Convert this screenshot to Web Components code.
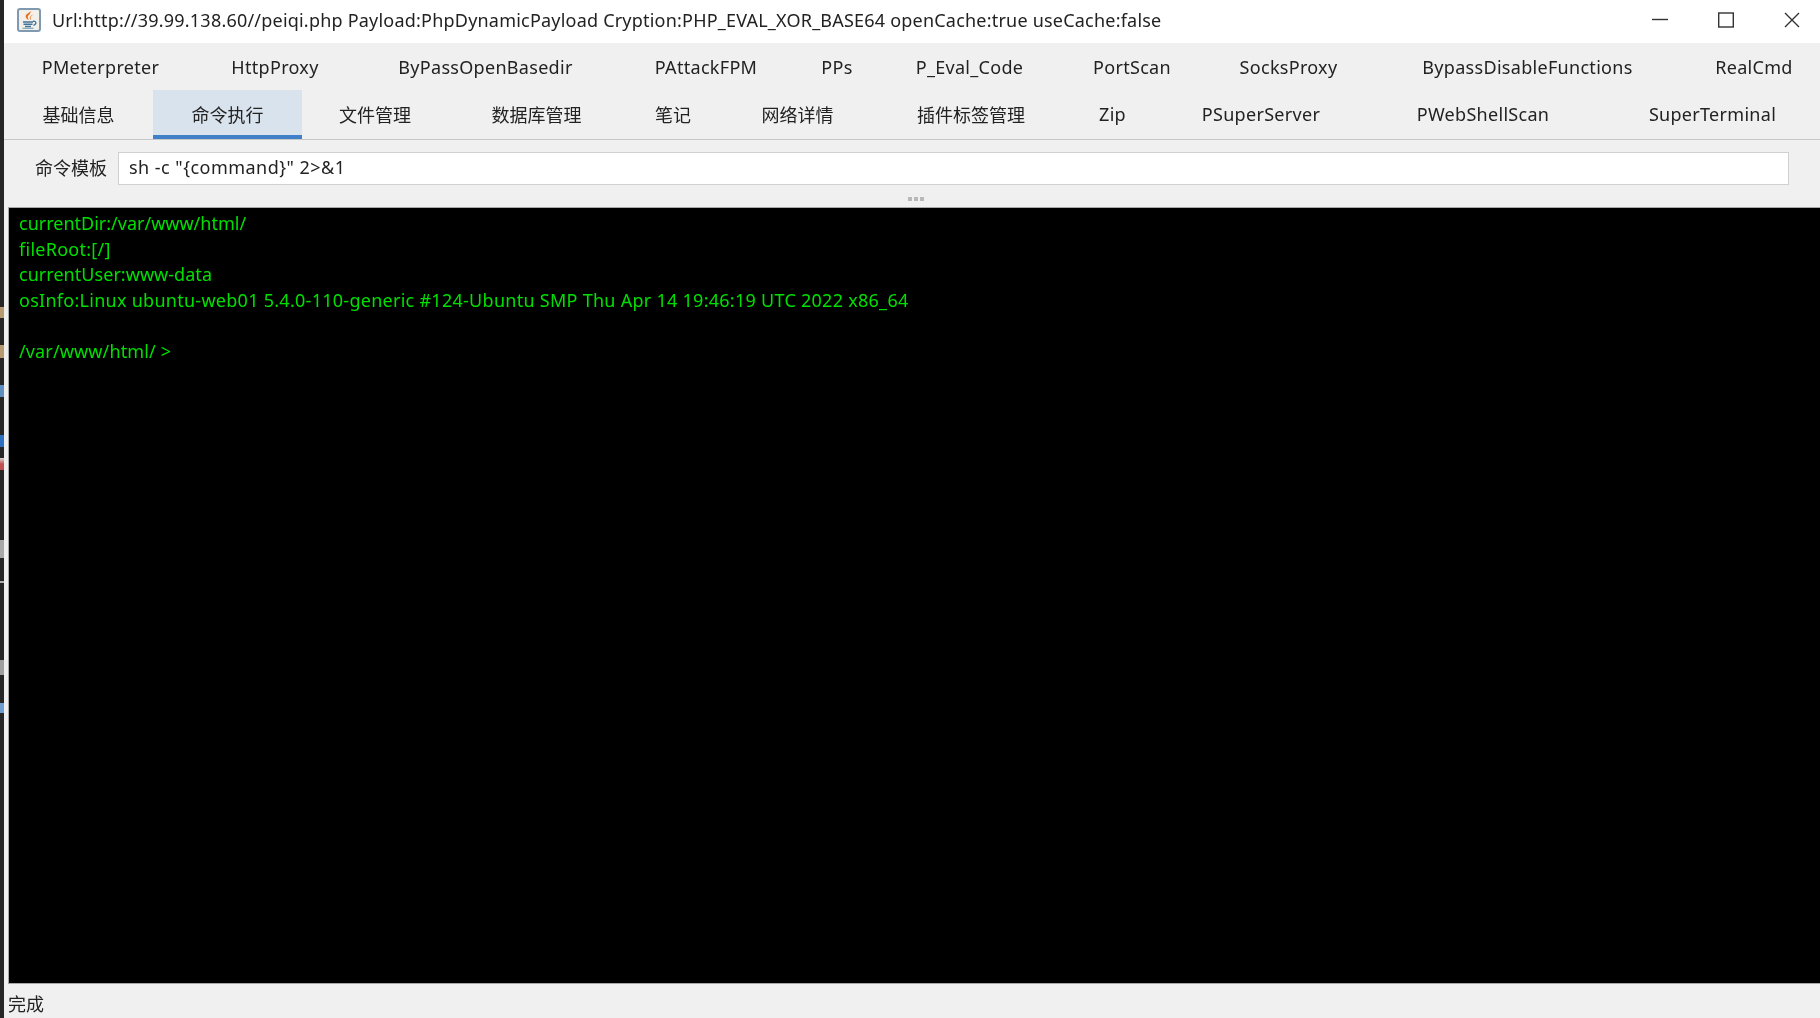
<!DOCTYPE html>
<html lang="zh">
<head>
<meta charset="utf-8">
<title>Shell</title>
<style>
    html, body { margin: 0; height: 100%; background: #262626; }
    body {
        display: flex;
        font: 18px "Noto Sans", "Noto Sans CJK SC", sans-serif;
        color: #222;
        overflow: hidden;
    }
</style>
</head>
<body>
<desk-edge></desk-edge>
<shell-window>
    <title-bar>Url:http://39.99.138.60//peiqi.php Payload:PhpDynamicPayload Cryption:PHP_EVAL_XOR_BASE64 openCache:true useCache:false</title-bar>
    <tab-row>
        <tab-item latin style="--w:193px">PMeterpreter</tab-item>
        <tab-item latin style="--w:156px">HttpProxy</tab-item>
        <tab-item latin style="--w:265px">ByPassOpenBasedir</tab-item>
        <tab-item latin style="--w:176px">PAttackFPM</tab-item>
        <tab-item latin style="--w:86px">PPs</tab-item>
        <tab-item latin style="--w:179px">P_Eval_Code</tab-item>
        <tab-item latin style="--w:146px">PortScan</tab-item>
        <tab-item latin style="--w:167px">SocksProxy</tab-item>
        <tab-item latin style="--w:311px">BypassDisableFunctions</tab-item>
        <tab-item latin style="--w:137px;padding-left:5px">RealCmd</tab-item>
    </tab-row>
    <tab-row last>
        <tab-item style="--w:149px">基础信息</tab-item>
        <tab-item selected style="--w:149px">命令执行</tab-item>
        <tab-item style="--w:146px">文件管理</tab-item>
        <tab-item style="--w:177px">数据库管理</tab-item>
        <tab-item style="--w:96px">笔记</tab-item>
        <tab-item style="--w:153px">网络详情</tab-item>
        <tab-item style="--w:194px">插件标签管理</tab-item>
        <tab-item latin style="--w:89px">Zip</tab-item>
        <tab-item latin style="--w:208px">PSuperServer</tab-item>
        <tab-item latin style="--w:236px">PWebShellScan</tab-item>
        <tab-item latin style="--w:219px;padding-left:4px">SuperTerminal</tab-item>
    </tab-row>
    <command-bar label="命令模板" value='sh -c "{command}" 2&gt;&amp;1'></command-bar>
    <split-handle></split-handle>
    <term-view>
<span style="letter-spacing:0">currentDir:/var/www/html/</span>
<span>fileRoot:[/]</span>
<span style="letter-spacing:.04px">currentUser:www-data</span>
<span>osInfo:Linux ubuntu-web01 5.4.0-110-generic #124-Ubuntu SMP Thu Apr 14 19:46:19 UTC 2022 x86_64</span>

<span style="letter-spacing:.13px">/var/www/html/ &gt;</span></term-view>
    <status-bar>完成</status-bar>
</shell-window>

<script>
    (function () {
        function define(name, css, html, setup) {
            customElements.define(name, class extends HTMLElement {
                constructor() {
                    super();
                    this.attachShadow({ mode: 'open' });
                    this.shadowRoot.innerHTML = '<style>' + css + '</style>' + html;
                }
                connectedCallback() {
                    if (setup) setup(this);
                }
            });
        }

        // sliver of the desktop showing left of the window
        define('desk-edge', `
            :host {
                display: block;
                flex: none;
                width: 4px;
                background:
                    linear-gradient(to bottom,
                        transparent 307px, #b89a70 307px, #b89a70 318px, transparent 318px,
                        transparent 345px, #b89a70 345px, #b89a70 358px, transparent 358px,
                        transparent 385px, #5f8fc0 385px, #5f8fc0 397px, transparent 397px,
                        transparent 435px, #2f6fc0 435px, #2f6fc0 447px, transparent 447px,
                        transparent 458px, #d8d8d8 458px, #c05050 464px, #c05050 470px, transparent 470px,
                        transparent 540px, #a8a8a8 540px, #a8a8a8 558px, transparent 558px,
                        transparent 581px, #b0b0b0 581px, #b0b0b0 583px, transparent 583px,
                        transparent 660px, #a0a0a0 660px, #a0a0a0 675px, transparent 675px,
                        transparent 703px, #6f9fd0 703px, #6f9fd0 713px, transparent 713px),
                    #262626;
            }
        `, '');

        define('shell-window', `
            :host {
                display: flex;
                flex-direction: column;
                flex: 1;
                min-width: 0;
                height: 1018px;
                background: #f0f0f0;
                filter: blur(.45px);
            }
        `, '<slot></slot>');

        define('title-bar', `
            :host {
                display: flex;
                align-items: center;
                flex: none;
                height: 43px;
                padding: 0 20px 3px 13px;
                box-sizing: border-box;
                background: #fff;
            }
            .icon { flex: none; width: 24px; height: 24px; margin-right: 11px; }
            .text { flex: 1; white-space: nowrap; letter-spacing: .21px; }
            .controls { display: flex; gap: 50px; align-items: center; }
            .controls svg { display: block; width: 16px; height: 16px; fill: none; stroke: #333; stroke-width: 1.4; }
        `, `
            <svg class="icon" viewBox="0 0 24 24">
                <rect x="1" y="1" width="22" height="22" rx="2" fill="#f3f0ea" stroke="#7f9ab0" stroke-width="2"/>
                <path d="M13.500 3c1 2.800-3.400 4-2.600 7 .2.800.6 1.300 1 2-3-1.200-4-3.200-2.800-5.200C10 5.500 12.700 4.700 13.500 3zM16 6.500c-1.200 1.300-3 2-2.400 4 .1.500.3.900.6 1.400-2.200-1-2.200-3.600 1.800-5.400z" fill="#e8701e"/>
                <path d="M6 14h10M6.500 16.300h9M8 18.500h6" stroke="#41739c" stroke-width="1.500" fill="none"/>
                <path d="M16 13.300c3.500-.5 4 2.800.5 4" stroke="#41739c" stroke-width="1.300" fill="none"/>
                <path d="M5.500 20.300h11" stroke="#7ea3c0" stroke-width="1.200" fill="none"/>
            </svg>
            <span class="text"><slot></slot></span>
            <div class="controls">
                <svg viewBox="0 0 16 16"><path d="M0 7.500h16"/></svg>
                <svg viewBox="0 0 16 16"><rect x=".7" y="1" width="14.600" height="14"/></svg>
                <svg viewBox="0 0 16 16"><path d="M1 1l14 14M15 1L1 15"/></svg>
            </div>
        `);

        define('tab-row', `
            :host {
                display: flex;
                flex: none;
                height: 47px;
                box-sizing: border-box;
            }
            :host([last]) {
                height: 50px;
                padding-bottom: 1px;
                border-bottom: 1px solid #c8c8c8;
                --tab-lift: 2px;
            }
        `, '<slot></slot>');

        // tab widths are uneven in the original, so each row passes its own --w
        define('tab-item', `
            :host {
                display: flex;
                align-items: center;
                justify-content: center;
                flex: 0 0 var(--w);
                padding-bottom: var(--tab-lift, 0);
                box-sizing: border-box;
                white-space: nowrap;
                margin-bottom: -1px;
            }
            :host([latin]) { letter-spacing: .3px; }
            :host([selected]) {
                background: #d9e3ed;
                box-shadow: inset 0 -4px 0 #4080c8;
            }
        `, '<slot></slot>');

        define('command-bar', `
            :host {
                display: flex;
                align-items: center;
                flex: none;
                height: 45px;
                padding: 12px 31px 1px 31px;
                box-sizing: border-box;
            }
            label { flex: none; margin: 0 11px 2px 0; }
            .field {
                flex: 1;
                height: 33px;
                line-height: 29px;
                padding: 0 10px;
                box-sizing: border-box;
                background: #fff;
                border: 1px solid #d0d0d0;
                white-space: pre;
                letter-spacing: .47px;
            }
        `, '<label></label><div class="field"></div>', function (el) {
            el.shadowRoot.querySelector('label').textContent = el.getAttribute('label');
            el.shadowRoot.querySelector('.field').textContent = el.getAttribute('value');
        });

        define('split-handle', `
            :host {
                display: flex;
                justify-content: center;
                align-items: center;
                gap: 2px;
                flex: none;
                height: 22px;
                padding: 6px 0 0 8px;
                box-sizing: border-box;
            }
            i { width: 4px; height: 4px; background: #b8b8b8; }
        `, '<i></i><i></i><i></i>');

        define('term-view', `
            :host {
                display: block;
                flex: 1;
                min-height: 0;
                margin-left: 4px;
                padding: 3px 0 0 10px;
                box-sizing: border-box;
                background: #000;
                border-top: 1px solid #a8a8a8;
                border-bottom: 1px solid #a8a8a8;
                border-left: 1px solid #a8a8a8;
                color: #00e000;
                line-height: 25.500px;
                letter-spacing: .27px;
                white-space: pre-line;
                overflow: hidden;
            }
            .lines { margin-top: -25.500px; }
        `, '<div class="lines"><slot></slot></div>');

        define('status-bar', `
            :host {
                display: flex;
                align-items: center;
                flex: none;
                height: 34px;
                padding: 4px 0 0 4px;
                box-sizing: border-box;
            }
        `, '<slot></slot>');
    })();
</script>
</body>
</html>
